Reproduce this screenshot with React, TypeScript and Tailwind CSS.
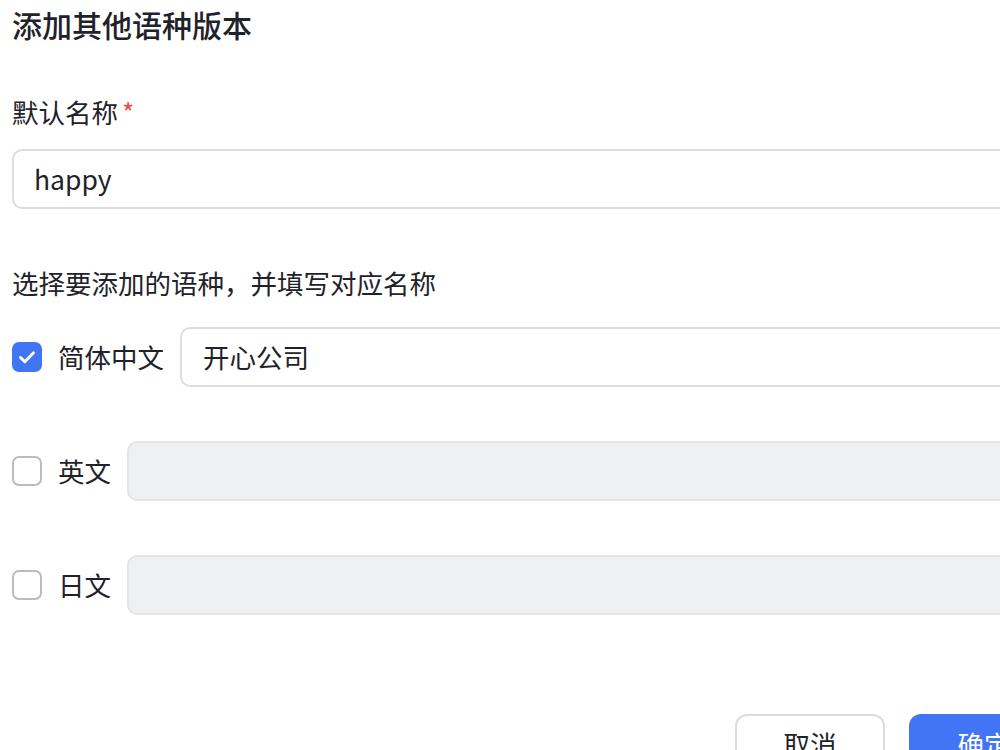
import React from "react";

const font = { fontFamily: '"Noto Sans CJK SC", "Noto Sans", sans-serif' };

function Check({ checked }: { checked?: boolean }) {
  return checked ? (
    <div className="w-[30px] h-[30px] rounded-[7px] bg-[#4275f4] flex items-center justify-center shrink-0">
      <svg width="30" height="30" viewBox="0 0 30 30" fill="none">
        <path d="M8.5 15.5l4.3 4.2L21.5 10.8" stroke="#fff" strokeWidth="3" strokeLinecap="round" strokeLinejoin="round" />
      </svg>
    </div>
  ) : (
    <div className="w-[30px] h-[30px] rounded-[7px] border-2 border-[#b9bcc3] bg-white shrink-0" />
  );
}

function Row({ label, checked, value }: { label: string; checked?: boolean; value?: string }) {
  return (
    <div className="flex items-center h-[60px]">
      <Check checked={checked} />
      <span className="ml-4 mr-4 text-[26.5px] text-[#1f2329] whitespace-nowrap">{label}</span>
      {checked ? (
        <div className="flex-1 h-[60px] rounded-[10px] border-2 border-[#dcdde0] bg-white flex items-center px-[21px] text-[26.5px] text-[#1f2329]">
          {value}
        </div>
      ) : (
        <div className="flex-1 h-[60px] rounded-[10px] border-2 border-[#e3e4e7] bg-[#eff0f1]" />
      )}
    </div>
  );
}

export default function App() {
  return (
    <div className="w-[1000px] h-[750px] overflow-hidden bg-white" style={font}>
      <div className="w-[1047px] ml-[12px]">
        <div className="text-[30px] leading-[48px] font-medium text-[#1f2329]">添加其他语种版本</div>
        <div className="mt-[44px] text-[26.5px] leading-[40px] text-[#1f2329]">
          默认名称<span className="text-[#f54a45] ml-1">*</span>
        </div>
        <div className="mt-[17px] h-[60px] rounded-[10px] border-2 border-[#dcdde0] flex items-center px-[20px] text-[26.5px] text-[#1f2329]">
          happy
        </div>
        <div className="mt-[54px] text-[26.5px] leading-[40px] text-[#1f2329]">选择要添加的语种，并填写对应名称</div>
        <div className="mt-[24px] flex flex-col gap-[54px]">
          <Row label="简体中文" checked value="开心公司" />
          <Row label="英文" />
          <Row label="日文" />
        </div>
        <div className="mt-[99px] flex justify-end gap-[24px]">
          <button className="w-[150px] h-[60px] rounded-[12px] border-2 border-[#dcdde0] bg-white text-[26.5px] text-[#1f2329]">取消</button>
          <button className="w-[150px] h-[60px] rounded-[12px] bg-[#4275f4] text-[26.5px] text-white">确定</button>
        </div>
      </div>
    </div>
  );
}
